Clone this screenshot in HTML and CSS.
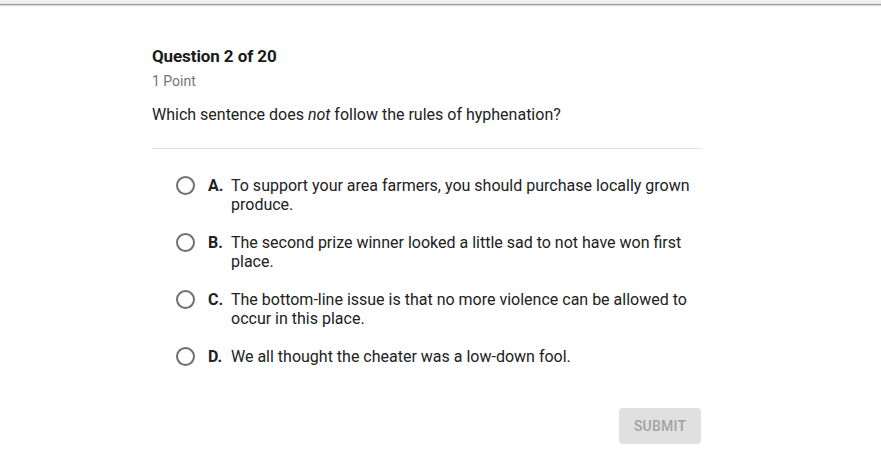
FILE: index.html
```html
<!DOCTYPE html>
<html>
<head>
<meta charset="utf-8">
<link rel="stylesheet" href="styles.css">
</head>
<body>
<div class="topbar"></div>
<main class="quiz">
  <h1 class="title">Question 2 of 20</h1>
  <div class="points">1 Point</div>
  <p class="prompt">Which sentence does <em>not</em> follow the rules of hyphenation?</p>
  <hr class="sep">
  <ul class="options">
    <li class="option"><span class="radio"></span><span class="letter">A.</span><span class="text">To support your area farmers, you should purchase locally grown produce.</span></li>
    <li class="option"><span class="radio"></span><span class="letter">B.</span><span class="text">The second prize winner looked a little sad to not have won first place.</span></li>
    <li class="option"><span class="radio"></span><span class="letter">C.</span><span class="text">The bottom-line issue is that no more violence can be allowed to occur in this place.</span></li>
    <li class="option"><span class="radio"></span><span class="letter">D.</span><span class="text">We all thought the cheater was a low-down fool.</span></li>
  </ul>
  <div class="actions"><button class="submit" disabled>SUBMIT</button></div>
</main>
</body>
</html>
```
FILE: styles.css
```css
html, body { margin: 0; padding: 0; background: #fff; }
body { font-family: Roboto, "Liberation Sans", sans-serif; color: #212121; }
.topbar {
  height: 4px;
  background: linear-gradient(#f4f4f4, #e6e6e6);
  border-bottom: 1px solid #9c9c9c;
  box-shadow: 0 1px 1px #d8d8d8;
}
.quiz { width: 549px; margin: 0 0 0 152px; padding-top: 41px; }
.title { margin: 0; font-size: 17px; line-height: 20px; font-weight: 700; color: #1a1a1a; letter-spacing: -0.1px; }
.points { margin-top: 6px; font-size: 14px; line-height: 18px; color: #757575; }
.prompt { margin: 15px 0 0; font-size: 16px; line-height: 20px; color: #212121; }
.sep { margin: 23px 0 0; border: 0; border-top: 1px solid #e0e0e0; height: 0; }
.options { list-style: none; margin: 27px 0 0; padding: 0 0 0 24px; display: flex; flex-direction: column; gap: 19px; }
.option { display: flex; align-items: flex-start; font-size: 16px; line-height: 19px; }
.radio { flex: none; width: 15px; height: 15px; border: 2px solid #6f6f6f; border-radius: 50%; margin: 0 13px 0 0; }
.letter { flex: none; width: 23px; font-weight: 700; }
.text { flex: 1; }
.actions { display: flex; justify-content: flex-end; margin-top: 42px; }
.submit {
  width: 82px; height: 36px; border: 0; border-radius: 4px;
  background: #e0e0e0; color: #a3a3a3;
  font-family: Roboto, "Liberation Sans", sans-serif; font-size: 14px; font-weight: 500;
  letter-spacing: 0.2px;
}
```
